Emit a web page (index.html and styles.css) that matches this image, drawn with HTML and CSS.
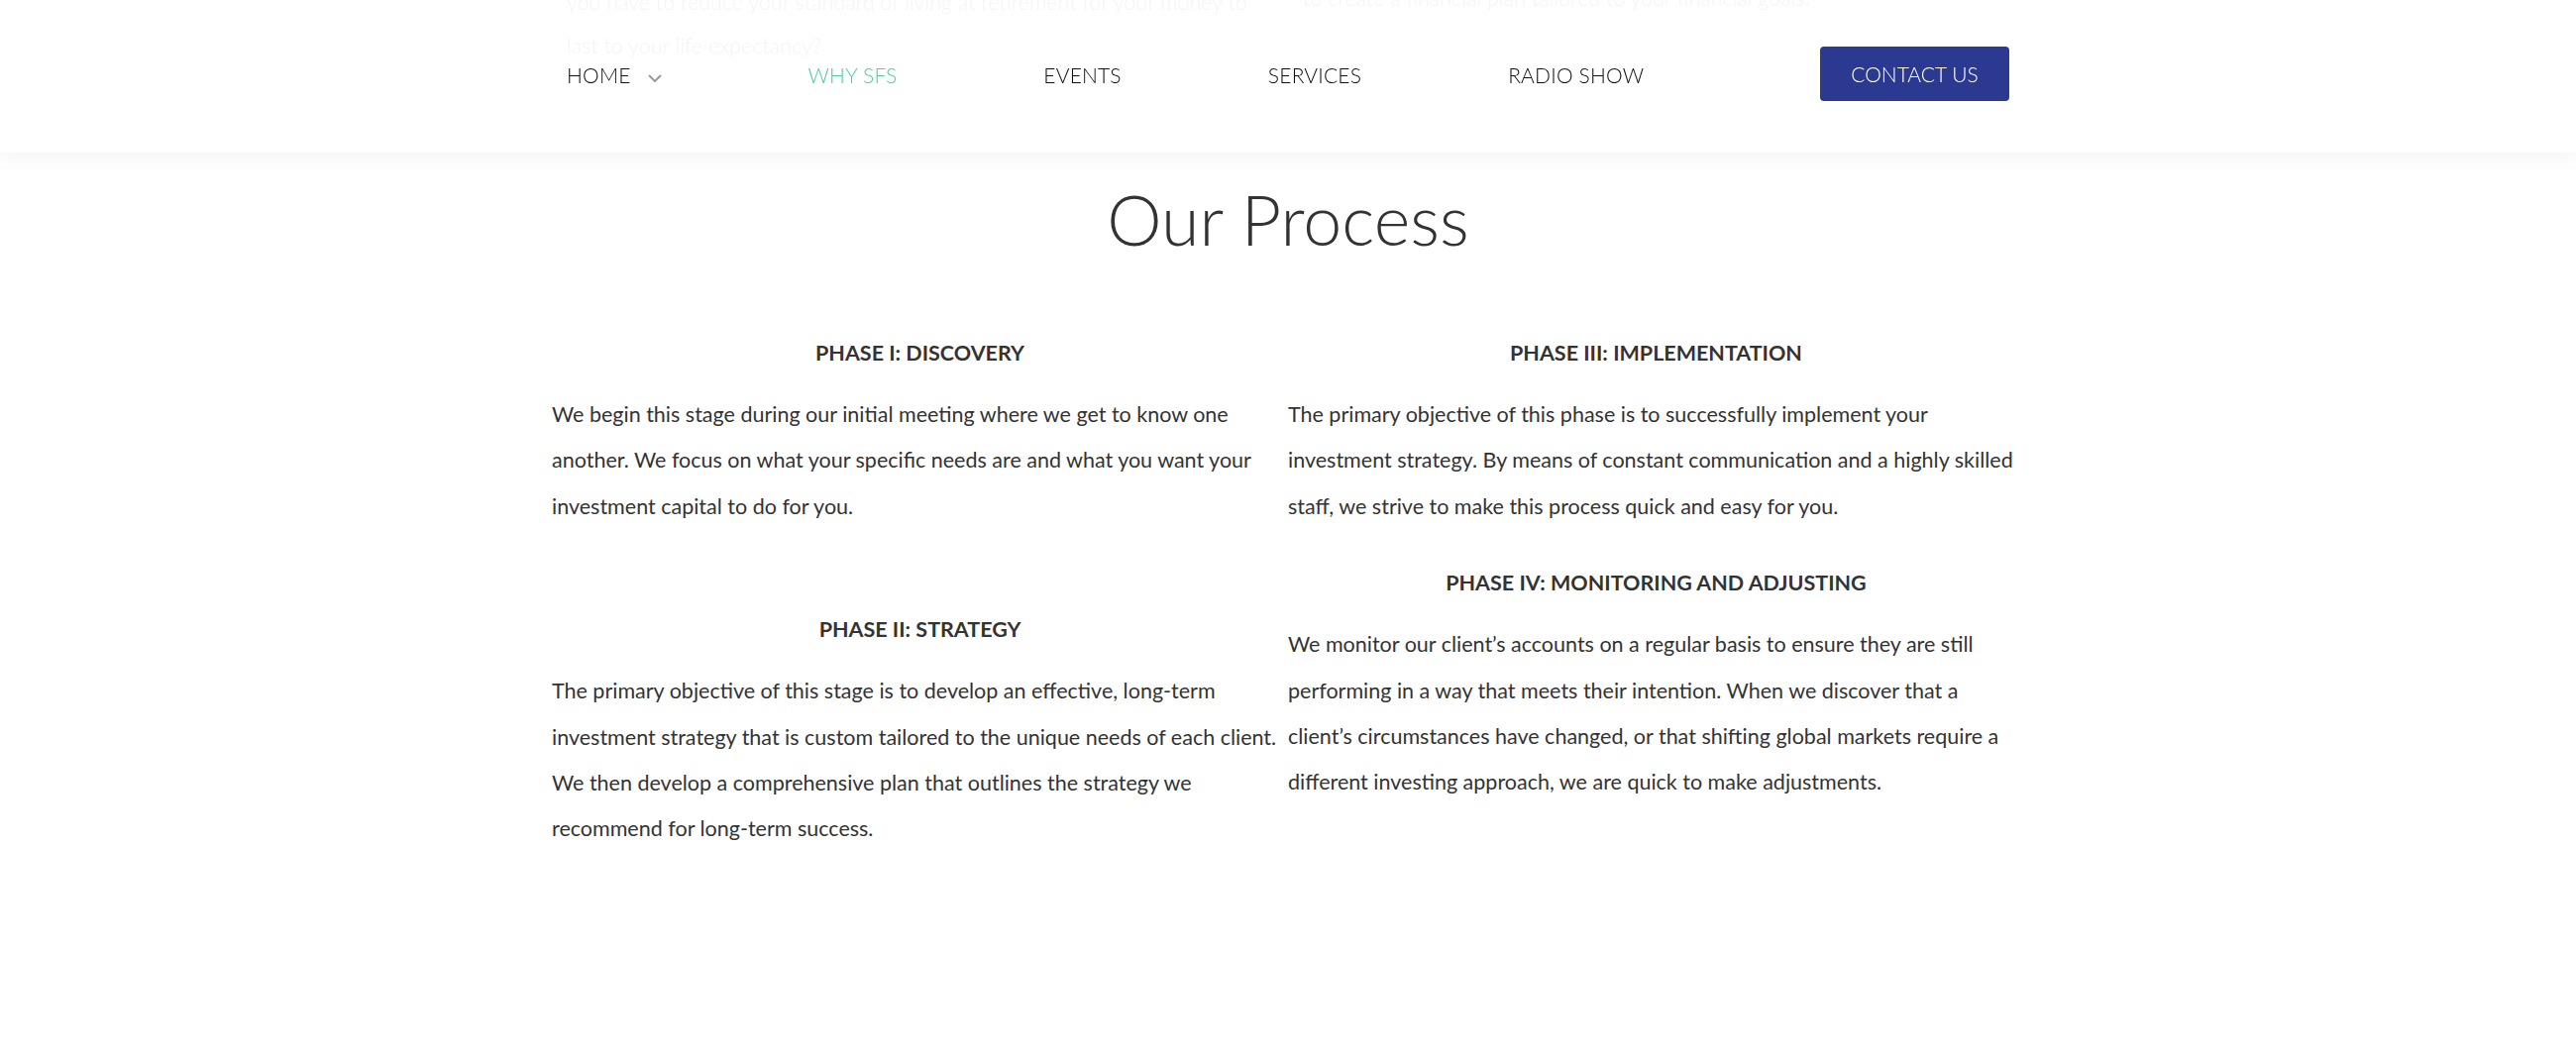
FILE: index.html
```html
<!DOCTYPE html>
<html lang="en">
<head>
<meta charset="utf-8">
<title>Our Process</title>
<link rel="stylesheet" href="styles.css">
</head>
<body>
<header class="site-header">
  <nav class="nav">
    <a class="nav-item" href="#">HOME <svg class="chev" width="14" height="8" viewBox="0 0 14 8"><polyline points="1,1 7,7 13,1" fill="none" stroke="#9a9a9a" stroke-width="2"/></svg></a>
    <a class="nav-item active" href="#">WHY SFS</a>
    <a class="nav-item" href="#">EVENTS</a>
    <a class="nav-item" href="#">SERVICES</a>
    <a class="nav-item" href="#">RADIO SHOW</a>
    <a class="btn-contact" href="#">CONTACT US</a>
  </nav>
</header>

<section class="intro">
  <div class="intro-inner">
    <p class="intro-text">you have to reduce your standard of living at retirement for your money to<br>last to your life expectancy?</p>
    <p class="intro-text">to create a financial plan tailored to your financial goals.</p>
  </div>
</section>

<main class="process">
  <h2 class="process-title">Our Process</h2>
  <div class="columns">
    <div class="col">
      <h3 class="phase">PHASE I: DISCOVERY</h3>
      <p class="phase-text">We begin this stage during our initial meeting where we get to know one another. We focus on what your specific needs are and what you want your investment capital to do for you.</p>
      <div class="spacer"></div>
      <h3 class="phase">PHASE II: STRATEGY</h3>
      <p class="phase-text">The primary objective of this stage is to develop an effective, long-term investment strategy that is custom tailored to the unique needs of each client. We then develop a comprehensive plan that outlines the strategy we recommend for long-term success.</p>
    </div>
    <div class="col">
      <h3 class="phase">PHASE III: IMPLEMENTATION</h3>
      <p class="phase-text">The primary objective of this phase is to successfully implement your investment strategy. By means of constant communication and a highly skilled staff, we strive to make this process quick and easy for you.</p>
      <h3 class="phase">PHASE IV: MONITORING AND ADJUSTING</h3>
      <p class="phase-text">We monitor our client’s accounts on a regular basis to ensure they are still performing in a way that meets their intention. When we discover that a client’s circumstances have changed, or that shifting global markets require a different investing approach, we are quick to make adjustments.</p>
    </div>
  </div>
</main>
</body>
</html>
```

FILE: styles.css
```css
* { box-sizing: border-box; }

html, body {
  margin: 0;
  padding: 0;
  background: #ffffff;
  font-family: Lato, "Open Sans", "Liberation Sans", sans-serif;
  color: #333333;
}

.site-header {
  position: fixed;
  top: 0;
  left: 0;
  right: 0;
  height: 154px;
  background: rgba(255, 255, 255, 0.93);
  box-shadow: 0 4px 22px rgba(0, 0, 0, 0.05);
  z-index: 10;
}

.nav {
  width: 1456px;
  height: 154px;
  margin: 0 auto;
  padding-bottom: 3px;
  display: flex;
  align-items: center;
  gap: 148px;
}

.nav-item {
  display: flex;
  align-items: center;
  gap: 17px;
  font-size: 21px;
  font-weight: 300;
  color: #111111;
  text-decoration: none;
  letter-spacing: 0.2px;
  line-height: 1;
}

.nav-item .chev {
  margin-top: 6px;
}

.nav-item.active {
  color: #4fcf9f;
}

.btn-contact {
  margin-left: auto;
  width: 191px;
  height: 55px;
  margin-top: -2px;
  display: flex;
  align-items: center;
  justify-content: center;
  background: #2c3991;
  border-radius: 4px;
  color: #ffffff;
  font-size: 21px;
  font-weight: 300;
  text-decoration: none;
  line-height: 1;
}

.intro {
  margin-top: -20px;
}

.intro-inner {
  width: 1486px;
  margin: 0 auto;
  display: grid;
  grid-template-columns: 1fr 1fr;
  align-items: end;
}

.intro-text {
  margin: 0;
  padding: 0 15px;
  font-size: 21.5px;
  font-weight: 300;
  line-height: 44px;
  color: #555555;
}

.intro-text + .intro-text {
  align-self: start;
  margin-top: -4px;
}

.process {
  width: 1486px;
  margin: 0 auto;
  padding-top: 111px;
  padding-bottom: 200px;
}

.process-title {
  margin: 0 0 70px;
  text-align: center;
  font-size: 70px;
  font-weight: 300;
  line-height: 84px;
  color: #333333;
}

.columns {
  display: grid;
  grid-template-columns: 1fr 1fr;
}

.phase {
  margin: 0 0 16px;
  text-align: center;
  font-size: 21.5px;
  font-weight: 700;
  line-height: 46px;
  color: #333333;
}

.phase-text {
  margin: 0 0 31px;
  font-size: 21.5px;
  font-weight: 400;
  line-height: 46.4px;
  color: #333333;
}

.spacer {
  height: 47px;
}
```
